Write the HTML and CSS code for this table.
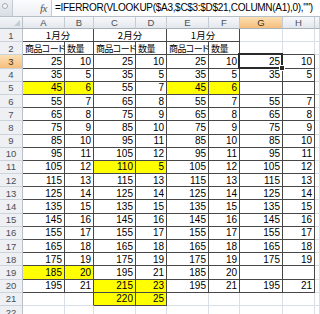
FILE: index.html
```html
<!DOCTYPE html>
<html lang="ja">
<head>
<meta charset="utf-8">
<link rel="stylesheet" href="styles.css">
</head>
<body>
<div class="fbar">
  <div class="nb"><span class="knob"></span></div>
  <div class="fx"><i>fx</i></div>
  <div class="ftext">=IFERROR(VLOOKUP($A3,$C$3:$D$21,COLUMN(A1),0),"")</div>
</div>
<div class="sheet">
  <div class="corner"></div><div class="h">A</div><div class="h">B</div><div class="h">C</div><div class="h">D</div><div class="h">E</div><div class="h">F</div><div class="h sel">G</div><div class="h">H</div><div class="h"></div>

  <div class="rh">1</div><div class="c s2 m d">1月分</div><div class="c s2 m d">2月分</div><div class="c s2 m d">1月分</div><div class="c"></div><div class="c"></div><div class="c"></div>
  <div class="rh">2</div><div class="c l d jp">商品コード</div><div class="c l d jp">数量</div><div class="c l d jp">商品コード</div><div class="c l d jp">数量</div><div class="c l d jp">商品コード</div><div class="c l d jp">数量</div><div class="c b"></div><div class="c b"></div><div class="c"></div>
  <div class="rh sel">3</div><div class="c d">25</div><div class="c d">10</div><div class="c d">25</div><div class="c d">10</div><div class="c d">25</div><div class="c d">10</div><div class="c d act">25<span class="handle"></span></div><div class="c d">10</div><div class="c"></div>
  <div class="rh">4</div><div class="c d">35</div><div class="c d">5</div><div class="c d">35</div><div class="c d">5</div><div class="c d">35</div><div class="c d">5</div><div class="c d">35</div><div class="c d">5</div><div class="c"></div>
  <div class="rh">5</div><div class="c d y">45</div><div class="c d y">6</div><div class="c d">55</div><div class="c d">7</div><div class="c d y">45</div><div class="c d y">6</div><div class="c d"></div><div class="c d"></div><div class="c"></div>
  <div class="rh">6</div><div class="c d">55</div><div class="c d">7</div><div class="c d">65</div><div class="c d">8</div><div class="c d">55</div><div class="c d">7</div><div class="c d">55</div><div class="c d">7</div><div class="c"></div>
  <div class="rh">7</div><div class="c d">65</div><div class="c d">8</div><div class="c d">75</div><div class="c d">9</div><div class="c d">65</div><div class="c d">8</div><div class="c d">65</div><div class="c d">8</div><div class="c"></div>
  <div class="rh">8</div><div class="c d">75</div><div class="c d">9</div><div class="c d">85</div><div class="c d">10</div><div class="c d">75</div><div class="c d">9</div><div class="c d">75</div><div class="c d">9</div><div class="c"></div>
  <div class="rh">9</div><div class="c d">85</div><div class="c d">10</div><div class="c d">95</div><div class="c d">11</div><div class="c d">85</div><div class="c d">10</div><div class="c d">85</div><div class="c d">10</div><div class="c"></div>
  <div class="rh">10</div><div class="c d">95</div><div class="c d">11</div><div class="c d">105</div><div class="c d">12</div><div class="c d">95</div><div class="c d">11</div><div class="c d">95</div><div class="c d">11</div><div class="c"></div>
  <div class="rh">11</div><div class="c d">105</div><div class="c d">12</div><div class="c d y">110</div><div class="c d y">5</div><div class="c d">105</div><div class="c d">12</div><div class="c d">105</div><div class="c d">12</div><div class="c"></div>
  <div class="rh">12</div><div class="c d">115</div><div class="c d">13</div><div class="c d">115</div><div class="c d">13</div><div class="c d">115</div><div class="c d">13</div><div class="c d">115</div><div class="c d">13</div><div class="c"></div>
  <div class="rh">13</div><div class="c d">125</div><div class="c d">14</div><div class="c d">125</div><div class="c d">14</div><div class="c d">125</div><div class="c d">14</div><div class="c d">125</div><div class="c d">14</div><div class="c"></div>
  <div class="rh">14</div><div class="c d">135</div><div class="c d">15</div><div class="c d">135</div><div class="c d">15</div><div class="c d">135</div><div class="c d">15</div><div class="c d">135</div><div class="c d">15</div><div class="c"></div>
  <div class="rh">15</div><div class="c d">145</div><div class="c d">16</div><div class="c d">145</div><div class="c d">16</div><div class="c d">145</div><div class="c d">16</div><div class="c d">145</div><div class="c d">16</div><div class="c"></div>
  <div class="rh">16</div><div class="c d">155</div><div class="c d">17</div><div class="c d">155</div><div class="c d">17</div><div class="c d">155</div><div class="c d">17</div><div class="c d">155</div><div class="c d">17</div><div class="c"></div>
  <div class="rh">17</div><div class="c d">165</div><div class="c d">18</div><div class="c d">165</div><div class="c d">18</div><div class="c d">165</div><div class="c d">18</div><div class="c d">165</div><div class="c d">18</div><div class="c"></div>
  <div class="rh">18</div><div class="c d">175</div><div class="c d">19</div><div class="c d">175</div><div class="c d">19</div><div class="c d">175</div><div class="c d">19</div><div class="c d">175</div><div class="c d">19</div><div class="c"></div>
  <div class="rh">19</div><div class="c d y">185</div><div class="c d y">20</div><div class="c d">195</div><div class="c d">21</div><div class="c d">185</div><div class="c d">20</div><div class="c d"></div><div class="c d"></div><div class="c"></div>
  <div class="rh">20</div><div class="c d">195</div><div class="c d">21</div><div class="c d y">215</div><div class="c d y">23</div><div class="c d">195</div><div class="c d">21</div><div class="c d">195</div><div class="c d">21</div><div class="c"></div>
  <div class="rh">21</div><div class="c"></div><div class="c r"></div><div class="c d y">220</div><div class="c d y">25</div><div class="c"></div><div class="c"></div><div class="c"></div><div class="c"></div><div class="c"></div>
  <div class="rh">22</div><div class="c"></div><div class="c"></div><div class="c"></div><div class="c"></div><div class="c"></div><div class="c"></div><div class="c"></div><div class="c"></div><div class="c"></div>
</div>
</body>
</html>
```
FILE: styles.css
```css
html, body {
  margin: 0;
  padding: 0;
  background: #ffffff;
}
body {
  width: 320px;
  height: 314px;
  overflow: hidden;
  font-family: "Liberation Sans", "Noto Sans CJK JP", sans-serif;
  color: #000;
}
.fbar {
  display: flex;
  height: 16px;
  background: #e4e8ed;
  border-bottom: 1px solid #b6bec8;
}
.nb {
  width: 12px;
  position: relative;
  background: linear-gradient(#eef1f4, #d9dee5);
}
.knob {
  position: absolute;
  left: 2px;
  top: 3px;
  width: 4px;
  height: 4px;
  border-radius: 50%;
  border: 1px solid #a5adb8;
  background: #f5f6f8;
}
.fx {
  width: 39px;
  display: flex;
  align-items: center;
  justify-content: flex-end;
  padding-right: 2px;
  box-sizing: border-box;
  background: linear-gradient(#fbfcfd, #eceff3);
  border-left: 1px solid #c3cad3;
}
.fx i {
  font-family: "Liberation Serif", serif;
  font-size: 11px;
  color: #555;
  margin-right: 2px;
  letter-spacing: -0.5px;
}
.ftext {
  flex: 1;
  background: #fff;
  border-left: 1px solid #c3cad3;
  padding-left: 3px;
  font-size: 10px;
  letter-spacing: -0.3px;
  line-height: 16px;
  white-space: nowrap;
  overflow: hidden;
}
.sheet {
  display: grid;
  grid-template-columns: 23px 42px 29px 42px 31px 42px 31px 43px 32px 1fr;
  grid-template-rows: 12px;
  grid-auto-rows: 13.2px;
}
.corner {
  position: relative;
  background: linear-gradient(#f3f5f7, #e2e6eb);
  border-right: 1px solid #b9c0c9;
  border-bottom: 1px solid #a9b1bb;
}
.corner::after {
  content: "";
  position: absolute;
  right: 2px;
  bottom: 2px;
  border-style: solid;
  border-width: 0 0 6px 6px;
  border-color: transparent transparent #c5cbd3 transparent;
}
.h {
  box-sizing: border-box;
  background: linear-gradient(#f7f8fa, #e3e7ec);
  border-right: 1px solid #c6ccd4;
  border-bottom: 1px solid #a9b1bb;
  font-size: 9.5px;
  color: #4a4f57;
  text-align: center;
  line-height: 11px;
}
.h.sel, .rh.sel {
  background: linear-gradient(#fbe0b4, #f6be7c);
  color: #3a3020;
}
.rh {
  box-sizing: border-box;
  background: #eef0f3;
  border-right: 1px solid #b9c0c9;
  border-bottom: 1px solid #cdd3da;
  font-size: 9.5px;
  color: #4a4f57;
  text-align: center;
  display: flex;
  align-items: center;
  justify-content: center;
}
.c {
  box-sizing: border-box;
  border-right: 1px solid #dadfe7;
  border-bottom: 1px solid #dadfe7;
  font-size: 10px;
  text-align: right;
  padding-right: 2px;
  display: flex;
  align-items: center;
  justify-content: flex-end;
  white-space: nowrap;
  overflow: visible;
}
.c.s2 { grid-column: span 2; }
.c.m { justify-content: center; padding-right: 0; }
.c.l { justify-content: flex-start; padding-left: 2px; padding-right: 0; }
.jp {
  font-family: "Noto Sans CJK JP", sans-serif;
  font-feature-settings: "palt";
  font-size: 9px;
  letter-spacing: -0.6px;
}
.m {
  font-family: "Noto Sans CJK JP", sans-serif;
  font-feature-settings: "palt";
  font-size: 9.5px;
}
.d, .r { border-right-color: #474747; }
.d, .b { border-bottom-color: #474747; }
.y { background: #ffff00; }
.act {
  position: relative;
}
.act::after {
  content: "";
  position: absolute;
  left: -2px;
  top: -2px;
  right: -1px;
  bottom: -1px;
  border: 2px solid #2a2a2a;
  pointer-events: none;
}
.handle {
  position: absolute;
  right: -3px;
  bottom: -3px;
  width: 4px;
  height: 4px;
  background: #2a2a2a;
  border: 1px solid #fff;
  z-index: 2;
}
```
